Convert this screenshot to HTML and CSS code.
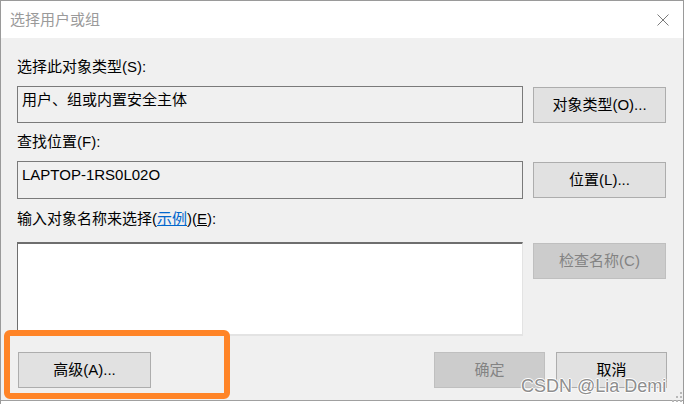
FILE: index.html
```html
<!DOCTYPE html>
<html lang="zh-CN">
<head>
<meta charset="utf-8">
<title>选择用户或组</title>
<link rel="stylesheet" href="styles.css">
</head>
<body>
<div class="window">
  <div class="titlebar">
    <span class="title">选择用户或组</span>
    <svg class="close" width="12" height="12" viewBox="0 0 12 12"><path d="M0.5 0.5 L11.5 11.5 M11.5 0.5 L0.5 11.5" stroke="#7a7a7a" stroke-width="1" fill="none"/></svg>
  </div>
  <div class="content">
    <div class="label l1">选择此对象类型(S):</div>
    <div class="row r1">
      <div class="field">用户、组或内置安全主体</div>
      <div class="btn side">对象类型(O)...</div>
    </div>
    <div class="label l2">查找位置(F):</div>
    <div class="row r2">
      <div class="field tall">LAPTOP-1RS0L02O</div>
      <div class="btn side">位置(L)...</div>
    </div>
    <div class="label l3">输入对象名称来选择(<span class="link">示例</span>)(<u>E</u>):</div>
    <div class="row r3">
      <div class="textarea"></div>
      <div class="btn side disabled">检查名称(C)</div>
    </div>
    <div class="row bottom">
      <div class="btn adv">高级(A)...</div>
      <div class="spacer"></div>
      <div class="btn small disabled">确定</div>
      <div class="btn small">取消</div>
    </div>
  </div>
  <div class="highlight"></div>
  <div class="watermark">CSDN @Lia Demi</div>
  <svg class="grip" width="10" height="10" viewBox="0 0 10 10">
    <rect x="8" y="0" width="2" height="2" fill="#b8b8b8"/>
    <rect x="4" y="4" width="2" height="2" fill="#b8b8b8"/>
    <rect x="8" y="4" width="2" height="2" fill="#b8b8b8"/>
    <rect x="0" y="8" width="2" height="2" fill="#b8b8b8"/>
    <rect x="4" y="8" width="2" height="2" fill="#b8b8b8"/>
    <rect x="8" y="8" width="2" height="2" fill="#b8b8b8"/>
  </svg>
</div>
</body>
</html>
```
FILE: styles.css
```css
html, body {
  margin: 0;
  padding: 0;
  background: #ffffff;
}
body {
  width: 684px;
  height: 404px;
  overflow: hidden;
  font-family: "Liberation Sans", "Noto Sans CJK SC", sans-serif;
  font-size: 15px;
  color: #000;
}
.window {
  position: relative;
  width: 684px;
  height: 404px;
  box-sizing: border-box;
  border: 1px solid #9a9a9a;
  border-bottom: none;
  background: #ffffff;
  display: flex;
  flex-direction: column;
}
.titlebar {
  height: 37px;
  flex: none;
  display: flex;
  align-items: center;
  justify-content: space-between;
  padding: 0 14px 0 9px;
  background: #ffffff;
}
.title {
  color: #9a9a9a;
  line-height: 20px;
}
.close {
  display: block;
}
.content {
  height: 363px;
  flex: none;
  box-sizing: border-box;
  background: #f0f0f0;
  border-bottom: 1px solid #a0a0a0;
  padding: 0 16px;
  display: flex;
  flex-direction: column;
}
.label {
  line-height: 20px;
  height: 20px;
  white-space: nowrap;
}
.l1 { margin-top: 19px; }
.l2 { margin-top: 9px; }
.l3 { margin-top: 10px; }
.link {
  color: #0066cc;
  text-decoration: underline;
}
.row {
  display: flex;
  align-items: flex-start;
  gap: 10px;
}
.r1 { margin-top: 9px; }
.r2 { margin-top: 9px; }
.r3 { margin-top: 13px; }
.field {
  width: 506px;
  height: 37px;
  box-sizing: border-box;
  border: 1px solid #7a7a7a;
  background: #f0f0f0;
  padding: 3px 4px 0 4px;
  line-height: 20px;
}
.field.tall {
  height: 38px;
}
.textarea {
  width: 506px;
  height: 94px;
  box-sizing: border-box;
  background: #ffffff;
  border-top: 2px solid #6e6e6e;
  border-left: 1px solid #6e6e6e;
  border-right: 1px solid #e3e3e3;
  border-bottom: 2px solid #e3e3e3;
}
.btn {
  box-sizing: border-box;
  height: 36px;
  background: #e1e1e1;
  border: 1px solid #adadad;
  display: flex;
  align-items: center;
  justify-content: center;
  line-height: 20px;
  white-space: nowrap;
}
.btn.side {
  width: 133px;
  margin-top: 1px;
}
.btn.disabled {
  background: #cccccc;
  border-color: #bfbfbf;
  color: #838383;
}
.bottom {
  margin-top: 16px;
  gap: 11px;
}
.btn.adv {
  width: 133px;
  margin-left: 1px;
}
.spacer {
  flex: 1;
}
.btn.small {
  width: 111px;
}
.highlight {
  position: absolute;
  left: 3px;
  top: 329px;
  width: 226px;
  height: 69px;
  box-sizing: border-box;
  border: 6px solid #ff8427;
  border-radius: 6px;
}
.watermark {
  position: absolute;
  left: 520px;
  top: 375px;
  font-family: "Liberation Sans", sans-serif;
  font-size: 18px;
  line-height: 20px;
  color: #8e8e8e;
  text-shadow: 1px 0 0 #ffffff, -1px 0 0 #ffffff, 0 1px 0 #ffffff, 0 -1px 0 #ffffff;
  white-space: nowrap;
}
.grip {
  position: absolute;
  left: 671px;
  top: 391px;
}
```
